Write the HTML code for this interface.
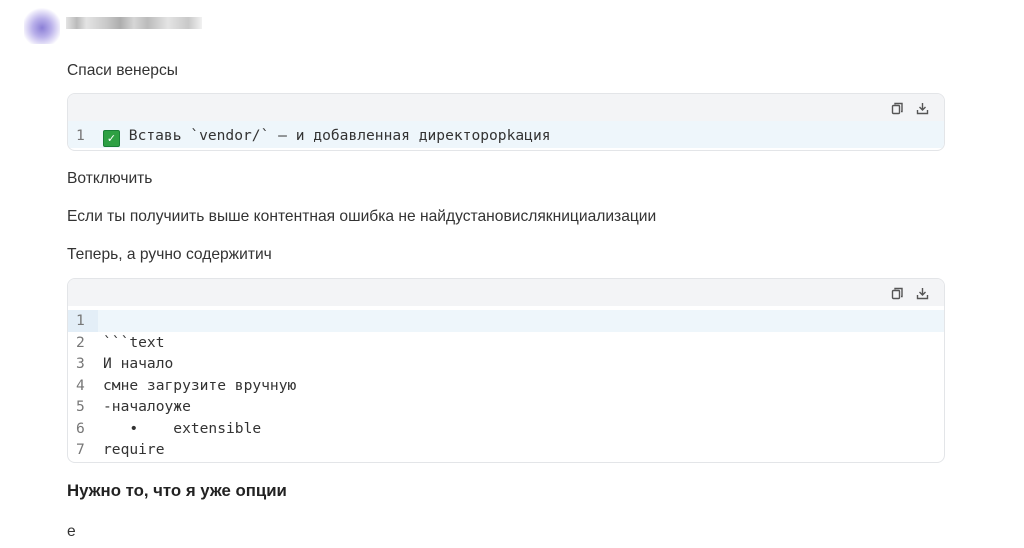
<!DOCTYPE html>
<html><head><meta charset="utf-8"><style>
body{margin:0;width:1024px;height:548px;background:#fff;font-family:"Liberation Sans","DejaVu Sans",sans-serif;color:#333;overflow:hidden;position:relative}
.t{position:absolute;left:67px;font-size:15.6px;line-height:18px}
.cb{position:absolute;left:67px;width:876px;border:1px solid #e3e5e8;border-radius:8px;background:#fff;overflow:hidden}
.hd{height:27px;background:#f3f4f6;position:relative}
.ln{position:relative;height:21.5px;font-family:"DejaVu Sans Mono","Liberation Mono",monospace;font-size:14.6px;line-height:21.5px;color:#333;white-space:pre}
.ln .n{position:absolute;left:8px;color:#777;width:20px}
.ln .c{position:absolute;left:35px}
.hl{background:#eef6fb}
.ic{position:absolute;top:8px}
</style></head><body>
<div style="position:absolute;left:24px;top:8px;width:36px;height:36px;background:radial-gradient(circle at 50% 55%,#8b7fd6 0,#b9b0ea 35%,#ece9fa 65%,#fff 75%)"></div>
<div style="position:absolute;left:66px;top:17px;width:136px;height:12px;background:linear-gradient(90deg,#ddd 0,#aaa 8%,#ddd 15%,#bbb 30%,#999 40%,#ccc 50%,#aaa 60%,#ddd 75%,#bbb 90%,#eee 100%);opacity:.8"></div>
<div class="t" style="top:62px">Спаси венерсы</div>
<div class="cb" style="top:93px;height:56px">
<div class="hd">
<svg class="ic" style="left:823px" width="13" height="13" viewBox="0 0 13 13"><rect x="1.5" y="3.5" width="7" height="8" rx="1" fill="none" stroke="#555" stroke-width="1.4"/><path d="M4 2.5V1.5h7v8h-1" fill="none" stroke="#555" stroke-width="1.4"/></svg>
<svg class="ic" style="left:848px" width="13" height="13" viewBox="0 0 13 13"><path d="M6.5 1v7M3.5 5l3 3 3-3M1.5 8v3.5h10V8" fill="none" stroke="#555" stroke-width="1.4"/></svg>
</div>
<div class="ln hl" style="top:0px;height:27px;line-height:29px"><span class="n">1</span><span class="c"><span style="display:inline-block;width:15px;height:15px;background:#2ea043;border:1px solid #1a7f37;border-radius:2px;color:#fff;font-size:11px;line-height:15px;text-align:center;vertical-align:-2px;font-family:'DejaVu Sans'">✓</span> Вставь &#96;vendor/&#96; — и добавленная директорорkация</span></div>
</div>
<div class="t" style="top:170px">Вотключить</div>
<div class="t" style="top:208px">Если ты получиить выше контентная ошибка не найдустановислякнициализации</div>
<div class="t" style="top:246px">Теперь, а ручно содержитич</div>
<div class="cb" style="top:278px;height:183px">
<div class="hd">
<svg class="ic" style="left:823px" width="13" height="13" viewBox="0 0 13 13"><rect x="1.5" y="3.5" width="7" height="8" rx="1" fill="none" stroke="#555" stroke-width="1.4"/><path d="M4 2.5V1.5h7v8h-1" fill="none" stroke="#555" stroke-width="1.4"/></svg>
<svg class="ic" style="left:848px" width="13" height="13" viewBox="0 0 13 13"><path d="M6.5 1v7M3.5 5l3 3 3-3M1.5 8v3.5h10V8" fill="none" stroke="#555" stroke-width="1.4"/></svg>
</div>
<div style="height:4px"></div>
<div class="ln hl"><span class="n" style="background:#e3eef7;left:0;padding-left:8px;width:22px">1</span><span class="c"></span></div>
<div class="ln"><span class="n">2</span><span class="c">&#96;&#96;&#96;text</span></div>
<div class="ln"><span class="n">3</span><span class="c">И начало</span></div>
<div class="ln"><span class="n">4</span><span class="c">смне загрузите вручную</span></div>
<div class="ln"><span class="n">5</span><span class="c">-началоуже</span></div>
<div class="ln"><span class="n">6</span><span class="c">   •    extensible</span></div>
<div class="ln"><span class="n">7</span><span class="c">require</span></div>
</div>
<div class="t" style="top:482px;font-size:16.8px;font-weight:bold;color:#222">Нужно то, что я уже опции</div>
<div class="t" style="top:523px">e</div>
</body></html>
